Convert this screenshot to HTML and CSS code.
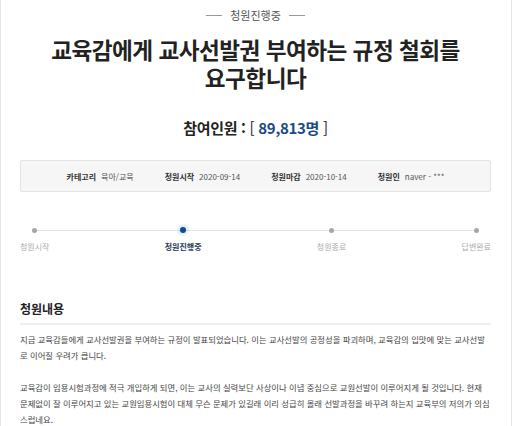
FILE: index.html
```html
<!DOCTYPE html>
<html lang="ko">
<head>
<meta charset="utf-8">
<title>청원</title>
<link rel="stylesheet" href="styles.css">
</head>
<body>
<div class="page">
  <div class="status"><span class="status-text">청원진행중</span></div>
  <h1 class="title"><span class="title-line">교육감에게 교사선발권 부여하는 규정 철회를</span><span class="title-line">요구합니다</span></h1>
  <div class="count"><span class="count-label">참여인원 :</span> <span class="count-br">[</span> <span class="count-num">89,813명</span> <span class="count-br">]</span></div>
  <div class="info">
    <div class="info-item"><span class="info-label">카테고리</span><span class="info-value">육아/교육</span></div>
    <div class="info-item"><span class="info-label">청원시작</span><span class="info-value">2020-09-14</span></div>
    <div class="info-item"><span class="info-label">청원마감</span><span class="info-value">2020-10-14</span></div>
    <div class="info-item"><span class="info-label">청원인</span><span class="info-value">naver - ***</span></div>
  </div>
  <div class="steps">
    <div class="step"><span class="dot"></span><span class="step-label">청원시작</span></div>
    <div class="step active"><span class="dot"></span><span class="step-label">청원진행중</span></div>
    <div class="step"><span class="dot"></span><span class="step-label">청원종료</span></div>
    <div class="step"><span class="dot"></span><span class="step-label">답변완료</span></div>
  </div>
  <h2 class="section-title">청원내용</h2>
  <div class="content">
    <p>지금 교육감들에게 교사선발권을 부여하는 규정이 발표되었습니다. 이는 교사선발의 공정성을 파괴하며, 교육감의 입맛에 맞는 교사선발로 이어질 우려가 큽니다.</p>
    <p>교육감이 임용시험과정에 적극 개입하게 되면, 이는 교사의 실력보단 사상이나 이념 중심으로 교원선발이 이루어지게 될 것입니다. 현재 문제없이 잘 이루어지고 있는 교원임용시험이 대체 무슨 문제가 있길래 이리 성급히 몰래 선발과정을 바꾸려 하는지 교육부의 저의가 의심스럽네요.</p>
  </div>
</div>
</body>
</html>
```
FILE: styles.css
```css
html, body {
  margin: 0;
  padding: 0;
  background: #fff;
}
body {
  font-family: "Noto Sans CJK KR", "Noto Sans", sans-serif;
  color: #333;
}
.page {
  box-sizing: border-box;
  width: 512px;
  min-height: 426px;
  border-left: 1px solid #e6e6e6;
  border-right: 1px solid #e6e6e6;
  padding: 7px 20px 0 19px;
  overflow: hidden;
}
.status {
  display: flex;
  justify-content: center;
  align-items: center;
  gap: 8px;
  font-size: 11px;
  line-height: 16px;
  color: #555;
}
.status::before,
.status::after {
  content: "";
  width: 16px;
  height: 1px;
  background: #999;
}
.title {
  margin: 13px 0 0;
  display: flex;
  flex-direction: column;
  align-items: center;
  font-size: 22.6px;
  line-height: 28px;
  font-weight: 700;
  letter-spacing: -0.5px;
  color: #222;
}
.title-line {
  display: block;
  height: 28px;
}
.count {
  margin-top: 26px;
  text-align: center;
  font-size: 15px;
  line-height: 20px;
  font-weight: 700;
  color: #222;
  letter-spacing: -0.3px;
}
.count-br {
  font-weight: 400;
}
.count-num {
  color: #1b4a8a;
}
.info {
  margin-top: 22px;
  height: 32px;
  box-sizing: border-box;
  background: #f6f6f6;
  border: 1px solid #e3e3e3;
  border-radius: 2px;
  display: flex;
  justify-content: center;
  align-items: center;
  gap: 31px;
  font-size: 8px;
}
.info-item {
  display: flex;
  gap: 5px;
  align-items: center;
}
.info-label {
  font-weight: 700;
  color: #333;
}
.info-value {
  color: #555;
}
.steps {
  position: relative;
  margin-top: 32px;
  display: flex;
  justify-content: space-between;
}
.steps::before {
  content: "";
  position: absolute;
  left: 15px;
  right: 15px;
  top: 6px;
  height: 1px;
  background: #e2e2e2;
}
.step {
  position: relative;
  display: flex;
  flex-direction: column;
  align-items: center;
  gap: 5px;
}
.dot {
  width: 12px;
  height: 12px;
  display: flex;
  align-items: center;
  justify-content: center;
}
.dot::after {
  content: "";
  width: 5px;
  height: 5px;
  border-radius: 50%;
  background: #a6a6a6;
}
.step.active .dot {
  border-radius: 50%;
  background: radial-gradient(circle, rgba(40,110,200,0.22) 0%, rgba(40,110,200,0.10) 60%, rgba(40,110,200,0) 100%);
}
.step.active .dot::after {
  background: #0f4a94;
  width: 6px;
  height: 6px;
}
.step-label {
  font-size: 8px;
  line-height: 12px;
  color: #aaa;
}
.step.active .step-label {
  color: #263a5a;
  font-weight: 700;
}
.section-title {
  margin: 47px 0 0;
  padding-bottom: 5px;
  border-bottom: 2px solid #eeeeee;
  font-size: 12px;
  line-height: 18px;
  font-weight: 700;
  color: #222;
}
.content {
  margin-top: 6px;
  font-size: 8.35px;
  line-height: 16px;
  color: #444;
}
.content p {
  margin: 0 0 16px;
}
```
